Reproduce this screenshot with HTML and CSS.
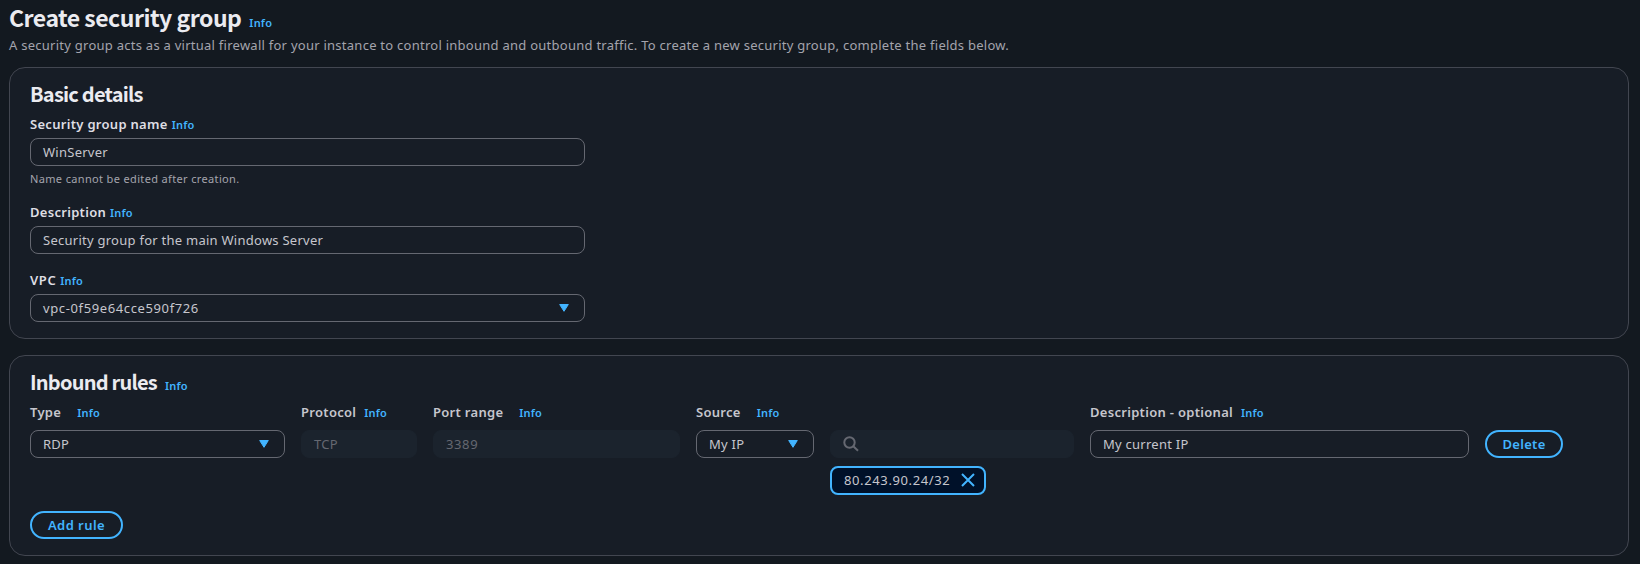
FILE: index.html
```html
<!DOCTYPE html>
<html lang="en">
<head>
<meta charset="utf-8">
<title>Create security group</title>
<link rel="stylesheet" href="styles.css">
</head>
<body>
<header class="page-header">
  <h1 class="page-title"><span>Create security group</span><a class="info">Info</a></h1>
  <p class="lead">A security group acts as a virtual firewall for your instance to control inbound and outbound traffic. To create a new security group, complete the fields below.</p>
</header>
<main class="cards">
  <section class="card details">
    <h2 class="card-title"><span>Basic details</span></h2>
    <div class="field">
      <div class="label"><span>Security group name</span><a class="info">Info</a></div>
      <div class="control"><span>WinServer</span></div>
      <div class="hint"><span>Name cannot be edited after creation.</span></div>
    </div>
    <div class="field">
      <div class="label"><span>Description</span><a class="info">Info</a></div>
      <div class="control"><span>Security group for the main Windows Server</span></div>
    </div>
    <div class="field">
      <div class="label"><span class="caps">VPC</span><a class="info">Info</a></div>
      <div class="control"><span class="digits">vpc-0f59e64cce590f726</span><svg class="caret" viewBox="0 0 10 8"><path d="M.7 .5h8.6L5 7.3z"/></svg></div>
    </div>
  </section>
  <section class="card inbound">
    <h2 class="card-title"><span>Inbound rules</span><a class="info">Info</a></h2>
    <div class="rule">
      <div class="col">
        <div class="label wide"><span>Type</span><a class="info">Info</a></div>
        <div class="control"><span>RDP</span><svg class="caret" viewBox="0 0 10 8"><path d="M.7 .5h8.6L5 7.3z"/></svg></div>
      </div>
      <div class="col">
        <div class="label mid"><span>Protocol</span><a class="info">Info</a></div>
        <div class="control disabled"><span>TCP</span></div>
      </div>
      <div class="col">
        <div class="label wide"><span>Port range</span><a class="info">Info</a></div>
        <div class="control disabled"><span class="digits">3389</span></div>
      </div>
      <div class="col">
        <div class="label wide"><span>Source</span><a class="info">Info</a></div>
        <div class="control"><span>My IP</span><svg class="caret" viewBox="0 0 10 8"><path d="M.7 .5h8.6L5 7.3z"/></svg></div>
      </div>
      <div class="col search-col">
        <div class="control disabled"><svg class="search" viewBox="0 0 16 16"><circle cx="6.5" cy="6.5" r="5.2"/><path d="M10.3 10.3l4.7 4.4"/></svg></div>
        <div class="token"><span class="digits">80.243.90.24/32</span><svg class="close" viewBox="0 0 14 14"><path d="M1 1l12 12M13 1L1 13"/></svg></div>
      </div>
      <div class="col">
        <div class="label mid"><span>Description - optional</span><a class="info">Info</a></div>
        <div class="control"><span>My current IP</span></div>
      </div>
      <button class="btn delete">Delete</button>
    </div>
    <button class="btn add">Add rule</button>
  </section>
</main>
</body>
</html>
```
FILE: styles.css
```css
* { box-sizing: border-box; }
body {
  margin: 0;
  padding: 0 11px 0 9px;
  height: 564px;
  overflow: hidden;
  background: #131920;
  color: #c6c6cd;
  font: 13px/18px "Noto Sans", "Open Sans", sans-serif;
  letter-spacing: .258px;
}
h1, h2, p { margin: 0; }
span, .info { white-space: nowrap; }
.page-header { height: 67px; padding-top: 3px; }
.page-title { display: flex; align-items: baseline; gap: 8px; height: 33px; font-size: 23px; line-height: 28px; font-weight: 700; color: #ebebf0; }
.page-title span, .card-title span { font-family: "Noto Sans CJK SC", "Noto Sans", sans-serif; letter-spacing: -.5px; }
.lead { color: #a4a4ad; line-height: 18px; white-space: nowrap; }
.info { color: #42b4ff; font-size: 11px; font-weight: 600; letter-spacing: .2px; }
.cards { display: flex; flex-direction: column; gap: 16px; }
.card { border: 1px solid #424650; border-radius: 16px; background: #171d26; padding: 13px 20px 0; }
.details { height: 272px; }
.inbound { height: 201px; }
.card-title { display: flex; align-items: baseline; gap: 8px; height: 33px; font-size: 20px; line-height: 26px; font-weight: 700; color: #ebebf0; }
.card-title span { letter-spacing: -.78px; }
.label { display: flex; align-items: baseline; gap: 4px; height: 24px; padding-top: 1px; line-height: 18px; font-weight: 600; letter-spacing: .3px; color: #dedee3; }
.rule .label { color: #c6c6cd; height: 28px; }
.rule .label.wide { gap: 16px; }
.rule .label.mid { gap: 8px; }
.caps { letter-spacing: .6px; }
.field { width: 555px; margin-bottom: 16px; }
.control { display: flex; align-items: center; justify-content: space-between; height: 28px; padding: 0 15px 0 12px; border: 1px solid #656871; border-radius: 8px; }
.control.disabled { background: #1b232d; border-color: #1b232d; color: #656871; }
.digits { letter-spacing: .62px; }
.hint { height: 20px; padding-top: 5px; font-size: 11px; letter-spacing: .35px; line-height: 16px; color: #a4a4ad; }
.caret { width: 10px; height: 8px; fill: #42b4ff; stroke: #42b4ff; stroke-width: 1; stroke-linejoin: round; }
.rule { display: grid; grid-template-columns: 255px 116px 247px 118px 244px 379px 78px; gap: 16px; height: 109px; align-items: start; }
.search-col { padding-top: 28px; }
.search { width: 16px; height: 16px; fill: none; stroke: #656871; stroke-width: 2; }
.token { display: flex; align-items: center; justify-content: space-between; width: 156px; height: 29px; margin-top: 8px; padding: 0 9px 2px 12px; border: 2px solid #42b4ff; border-radius: 8px; background: #001129; }
.close { width: 14px; height: 14px; fill: none; stroke: #42b4ff; stroke-width: 2; }
.btn { display: flex; align-items: center; justify-content: center; height: 28px; padding: 0; border: 2px solid #42b4ff; border-radius: 14px; background: transparent; color: #42b4ff; font: 600 13px/18px "Noto Sans", "Open Sans", sans-serif; letter-spacing: .3px; }
.btn.delete { width: 78px; margin-top: 28px; }
.btn.add { width: 93px; letter-spacing: .45px; }
```
